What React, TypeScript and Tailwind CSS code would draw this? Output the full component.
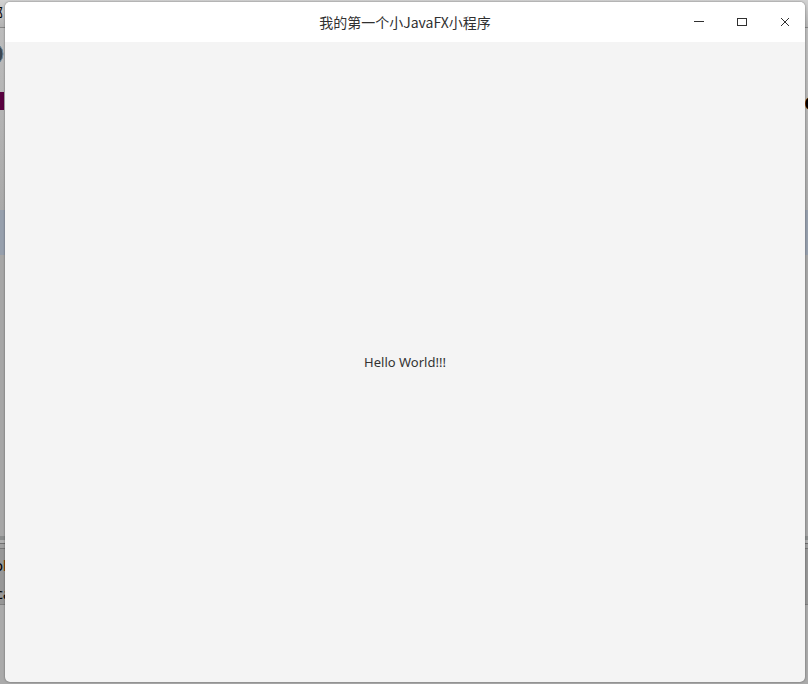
const windowButtons = [
  {
    id: "minimize",
    label: "Minimize",
    icon: <path d="M1 5.5H11" />,
  },
  {
    id: "maximize",
    label: "Maximize",
    icon: <rect x="1.5" y="2.5" width="9" height="7" />,
  },
  {
    id: "close",
    label: "Close",
    icon: <path d="M2 2L10 10M10 2L2 10" />,
  },
];

// Editor behind the window, only its outer edges show
function Backdrop() {
  return (
    <div className="absolute inset-0 flex flex-col overflow-hidden bg-[#aaaaaa] text-black" aria-hidden="true">
      <div className="flex h-[28px] shrink-0 items-start border-b border-[#858585] bg-linear-to-b from-[#d2d2d2] to-[#b2b2b2]">
        <div className="flex w-[3px] justify-end overflow-hidden font-['Noto_Sans_CJK_SC',sans-serif] text-sm leading-6">
          <span>部</span>
        </div>
      </div>
      <div className="h-[182px] shrink-0 bg-linear-to-b from-[#bcbcbc] to-[#a9a9a9]">
        <div className="flex h-[52px] items-center">
          <svg className="h-6 w-[5px]" viewBox="0 0 5 24">
            <circle cx="-9" cy="12" r="12" fill="#3c4754" stroke="#65869f" strokeWidth="1" />
          </svg>
        </div>
        <div className="flex h-[42px] items-center justify-between">
          <div className="h-[18px] w-[4px] bg-[#58003f]" />
          <div className="w-[4px] overflow-hidden font-['Noto_Sans',sans-serif] text-2xl leading-6 font-semibold">
            <span>e</span>
          </div>
        </div>
      </div>
      <div className="h-[45px] shrink-0 bg-[#969fac]" />
      <div className="h-[281px] shrink-0 bg-[#a6a6a6]" />
      <div className="h-[4px] shrink-0 bg-[#8b8d8d]" />
      <div className="h-[4px] shrink-0 border-b border-[#6f6f6f] bg-[#b0b0b0]" />
      <div className="h-[5px] shrink-0 border-b border-[#777777] bg-[#a0a0a0]" />
      <div className="h-[56px] shrink-0 border-b border-[#808080] bg-[#979797] font-['Noto_Sans',sans-serif] text-sm leading-6">
        <div className="flex h-[34px] items-center">
          <div className="flex w-[3px] justify-end overflow-hidden">
            <span>o</span>
          </div>
          <span className="font-bold text-[#8a4208]">l</span>
        </div>
        <div className="flex h-[21px] items-center">
          <div className="flex w-[3px] justify-end overflow-hidden">
            <span>c</span>
          </div>
          <span>a</span>
        </div>
      </div>
    </div>
  );
}

function TitleBar() {
  return (
    <header className="grid h-10 shrink-0 grid-cols-[1fr_auto_1fr] items-center bg-white">
      <h1 className="col-start-2 font-['Noto_Sans_CJK_SC',sans-serif] text-sm text-[#303030]">
        我的第一个小JavaFX小程序
      </h1>
      <div className="flex justify-end gap-[3px]">
        {windowButtons.map((button) => (
          <button
            key={button.id}
            type="button"
            aria-label={button.label}
            className="flex h-10 w-10 items-center justify-center"
          >
            <svg className="size-3" viewBox="0 0 12 12" fill="none" stroke="#303030" strokeWidth="1">
              {button.icon}
            </svg>
          </button>
        ))}
      </div>
    </header>
  );
}

export default function App() {
  return (
    <div className="relative h-screen pt-[2px] pr-[3px] pb-[2px] pl-[5px]">
      <Backdrop />
      <div className="relative flex h-full flex-col overflow-hidden rounded-[5px] bg-[#f4f4f4] shadow-[0_0_2px_rgba(0,0,0,0.5)]">
        <TitleBar />
        <main className="flex flex-1 items-center justify-center">
          <p className="font-['Noto_Sans',sans-serif] text-[13px] leading-5 text-[#333333]">Hello World!!!</p>
        </main>
      </div>
    </div>
  );
}
